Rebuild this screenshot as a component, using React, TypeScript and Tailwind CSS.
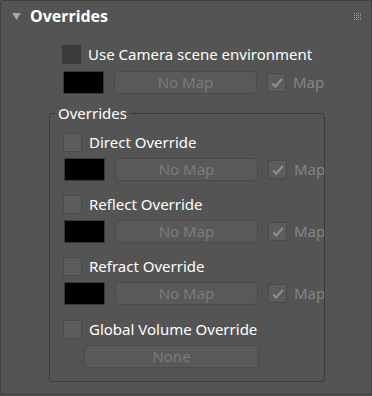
import React from 'react';

const font = { fontFamily: '"Noto Sans", "Open Sans", sans-serif' };

function Check({ checked, dark }: { checked?: boolean; dark?: boolean }) {
  return (
    <span
      className={`flex h-[19px] w-[19px] shrink-0 items-center justify-center border ${
        dark ? 'border-[#3a3a3a] bg-[#3b3b3b]' : 'border-[#4a4a4a] bg-[#5c5c5c]'
      }`}
    >
      {checked && (
        <svg viewBox="0 0 16 16" className="h-[14px] w-[14px]">
          <path d="M2.5 8.5 L6 12 L13.5 3.5" fill="none" stroke="#8c8c8c" strokeWidth="2.6" />
        </svg>
      )}
    </span>
  );
}

function MapRow({ label }: { label: string }) {
  return (
    <div className="flex h-[23px] items-center">
      <div className="h-[23px] w-[41px] shrink-0 border border-[#383838] bg-black" />
      <button className="ml-[10px] h-[23px] w-[143px] shrink-0 rounded-[4px] border border-[#4b4b4b] bg-[#595959] text-[15px] leading-[21px] text-[#7b7b7b]">
        {label}
      </button>
      <span className="ml-[10px]">
        <Check checked />
      </span>
      <span className="ml-[7px] whitespace-nowrap text-[15px] leading-[19px] text-[#858585]">Map</span>
    </div>
  );
}

function Option({ label, dark }: { label: string; dark?: boolean }) {
  return (
    <div className="flex h-[19px] items-center gap-[7px]">
      <Check dark={dark} />
      <span className="whitespace-nowrap text-[15px] leading-[19px] text-white">{label}</span>
    </div>
  );
}

export default function App() {
  return (
    <div className="h-[396px] w-[372px] overflow-hidden bg-[#545454]" style={font}>
      <div className="h-[395px] w-[372px] rounded-tl-[3px] border border-[#404040]">
        {/* Header */}
        <div className="flex h-[30px] items-center pl-[11px] pr-[10px]">
          <svg viewBox="0 0 10 8" className="h-[7px] w-[9px]">
            <path d="M0 0 H10 L5 8 Z" fill="#a6a6a6" />
          </svg>
          <span className="ml-[9px] text-[16px] font-bold leading-[20px] text-white">Overrides</span>
          <div className="ml-auto grid grid-cols-4 gap-[1px]">
            {Array.from({ length: 16 }).map((_, i) => (
              <span key={i} className="h-[1px] w-[1px] bg-[#a0a0a0]" />
            ))}
          </div>
        </div>

        <div className="pl-[61px] pt-[14px]">
          <Option label="Use Camera scene environment" dark />
          <div className="mt-[7px] pl-[1px]">
            <MapRow label="No Map" />
          </div>
        </div>

        {/* Group box */}
        <div className="relative ml-[48px] mr-[46px] mt-[19px] h-[269px] rounded-[3px] border border-[#3c3c3c]">
          <span className="absolute -top-[11px] left-[5px] bg-[#545454] px-[3px] text-[15px] leading-[20px] text-white">
            Overrides
          </span>
          <div className="overflow-hidden pl-[13px] pt-[19px]">
            <Option label="Direct Override" />
            <div className="mt-[6px] pl-[1px]">
              <MapRow label="No Map" />
            </div>
            <div className="mt-[14px]">
              <Option label="Reflect Override" />
            </div>
            <div className="mt-[6px] pl-[1px]">
              <MapRow label="No Map" />
            </div>
            <div className="mt-[14px]">
              <Option label="Refract Override" />
            </div>
            <div className="mt-[6px] pl-[1px]">
              <MapRow label="No Map" />
            </div>
            <div className="mt-[15px]">
              <Option label="Global Volume Override" />
            </div>
            <button className="ml-[21px] mt-[6px] block h-[23px] w-[175px] rounded-[4px] border border-[#4b4b4b] bg-[#595959] text-[15px] leading-[21px] text-[#7b7b7b]">
              None
            </button>
          </div>
        </div>
      </div>
    </div>
  );
}
